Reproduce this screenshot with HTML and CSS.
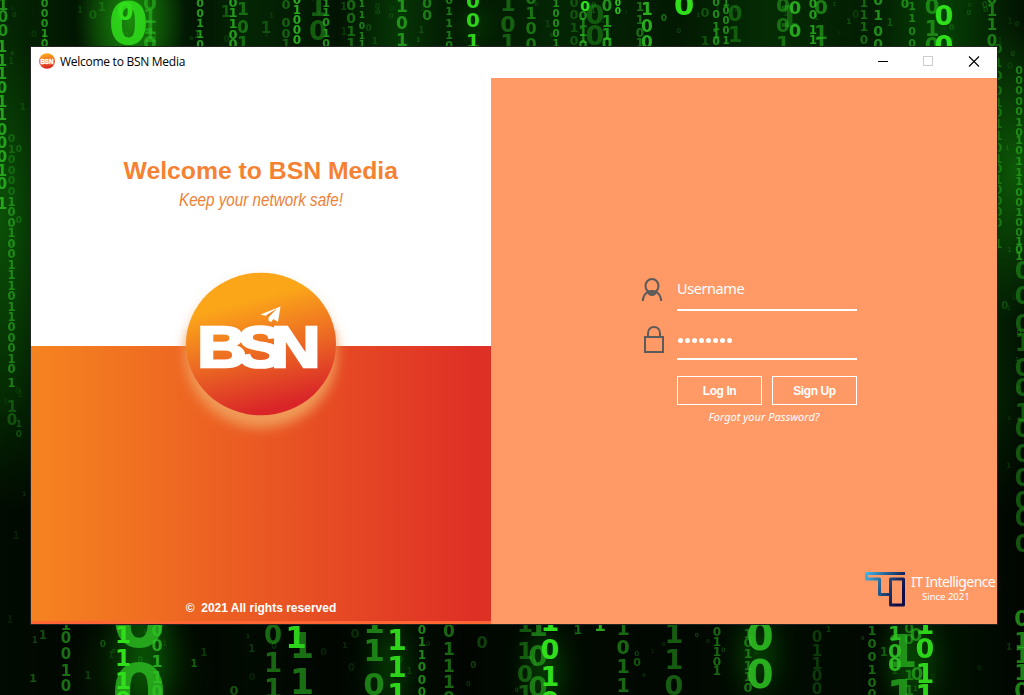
FILE: index.html
```html
<!DOCTYPE html>
<html lang="en">
<head>
<meta charset="utf-8">
<title>Welcome to BSN Media</title>
<link rel="stylesheet" href="styles.css">
</head>
<body>
<svg class="rain" id="rain" width="1024" height="695" viewBox="0 0 1024 695" aria-hidden="true"></svg>
<main class="window">
  <header class="titlebar">
    <svg class="app-icon" width="16" height="16" viewBox="0 0 16 16">
      <defs><linearGradient id="ig" x1="0" y1="0" x2=".2" y2="1"><stop offset=".15" stop-color="#fba51b"/><stop offset="1" stop-color="#dc2827"/></linearGradient></defs>
      <ellipse cx="8" cy="8" rx="8" ry="7.7" fill="url(#ig)"/>
      <text class="brand" x="1.4" y="10.5" font-size="6.8" textLength="13" lengthAdjust="spacingAndGlyphs" stroke-width=".4">BSN</text>
    </svg>
    <span class="caption">Welcome to BSN Media</span>
    <svg class="controls" width="115" height="31" viewBox="0 0 115 31" fill="none" shape-rendering="crispEdges">
      <path d="M-4 14.5H6" stroke="#000"/>
      <rect x="41.5" y="9.5" width="9" height="9" stroke="#ccc"/>
      <path d="M87 9.500l10 10M97 9.500l-10 10" stroke="#000" stroke-width="1.1" shape-rendering="auto"/>
    </svg>
  </header>
  <div class="body">
    <section class="welcome">
      <div class="intro">
        <svg class="headings" width="300" height="66" viewBox="0 0 300 66">
          <text class="headline" x="22.500" y="31" textLength="274.500" lengthAdjust="spacingAndGlyphs">Welcome to BSN Media</text>
          <text class="tagline" x="78" y="58" textLength="164" lengthAdjust="spacingAndGlyphs">Keep your network safe!</text>
        </svg>
      </div>
      <div class="brand-panel"><p class="copyright">©&nbsp; 2021 All rights reserved</p></div>
      <svg class="logo" width="210" height="200" viewBox="0 0 210 200">
        <defs>
          <linearGradient id="lg" x1=".36" y1="0" x2=".64" y2="1"><stop offset=".2" stop-color="#fba519"/><stop offset=".55" stop-color="#ec6a23"/><stop offset=".94" stop-color="#d92528"/></linearGradient>
          <filter id="soft" x="-20%" y="-20%" width="140%" height="140%"><feGaussianBlur stdDeviation="6"/></filter>
        </defs>
        <ellipse cx="105" cy="111" rx="76" ry="74" fill="#f09a57" filter="url(#soft)"/>
        <rect x="0" y="0" width="210" height="86" fill="#fff" opacity=".35"/>
        <ellipse cx="105" cy="101" rx="75" ry="71.300" fill="url(#lg)"/>
        <text class="brand" transform="scale(1.19 1)" x="34.700 68.500 96.600" y="124" font-size="57.500" stroke-width="2.600">BSN</text>
        <path d="M104.500 71.500L124.500 63.500L122 79L117.500 76L115 79L112.500 77.500L112 73.500Z" fill="#fff"/>
        <path d="M109.500 72.700L121 65.500L112.700 74.300L112.500 77.500L112 74Z" fill="#ee8120"/>
      </svg>
    </section>
    <section class="login">
      <form class="form">
        <svg class="icon user" width="22" height="24" viewBox="0 0 22 24" fill="none" stroke="#5b5b5b" stroke-width="2">
          <ellipse cx="11" cy="8" rx="6.500" ry="7"/><path d="M1.800 23C2 18.500 4 15.500 7 13.800c.5 2 2 3.300 4 3.300s3.500-1.300 4-3.300c3 1.700 5 4.700 5.200 9.200M7 13.800c2-1.200 6-1.200 8 0"/>
        </svg>
        <div class="field username">Username</div>
        <svg class="icon lock" width="22" height="28" viewBox="0 0 22 28" fill="none" stroke="#5b5b5b" stroke-width="2">
          <rect x="1" y="11" width="18" height="15"/><path d="M4 11V7.500C4 3.500 6.500 1 10 1s6 2.500 6 6.500V11"/>
        </svg>
        <div class="field password"><i></i><i></i><i></i><i></i><i></i><i></i><i></i><i></i></div>
        <div class="actions"><button type="button">Log In</button><button type="button">Sign Up</button></div>
        <a class="forgot">Forgot your Password?</a>
      </form>
      <footer class="vendor">
        <svg width="42" height="38" viewBox="0 0 42 38" fill="none" stroke="url(#vg)" stroke-width="3">
          <defs><linearGradient id="vg" gradientUnits="userSpaceOnUse" x1="1" y1="0" x2="40" y2="20"><stop offset="0" stop-color="#42c2f8"/><stop offset=".5" stop-color="#235c8c"/><stop offset="1" stop-color="#100b45"/></linearGradient></defs>
          <path d="M41 3.500H2.500V9H15.500V24.500H26.500V9H39.500V35H26.500V24.500" stroke-linejoin="round"/>
        </svg>
        <div class="vendor-text"><span class="vendor-name">IT Intelligence</span><span class="since">Since 2021</span></div>
      </footer>
    </section>
  </div>
</main>
<script src="rain.js"></script>
</body>
</html>
```
FILE: styles.css
```css
* { box-sizing: border-box; }
body { margin: 0; width: 1024px; height: 695px; overflow: hidden; padding: 47px 27px 0 31px; font-family: "Liberation Sans", sans-serif;
  background:
    linear-gradient(transparent 46px, transparent 400px, rgba(0,0,0,.72) 510px),
    radial-gradient(ellipse 55px 85px at 130px 20px, #1a8a0c, transparent),
    radial-gradient(ellipse 75px 75px at 140px 670px, #148009, transparent),
    radial-gradient(ellipse 60px 150px at 1015px 170px, #0c5706, transparent),
    radial-gradient(ellipse 60px 200px at 0 220px, #0b5007, transparent),
    linear-gradient(90deg, #042702, #021502 8%, #053404 13%, #021502 19%, #042604 24%, #021302 33%, #063605 39%, #021302 45%, #042604 54%, #031902 66%, #042c03 75%, #031d02 85%, #054004 92%, #021202); }
.rain { position: absolute; left: 0; top: 0; font-family: "DejaVu Sans", sans-serif; font-weight: bold; z-index: -1; }
.glow { fill: #10a008; filter: blur(14px); }
.window { width: 966px; height: 577px; box-shadow: 0 0 0 1px #232323; display: flex; flex-direction: column; }
.titlebar { height: 31px; background: #fff; display: flex; align-items: center; padding-left: 8px; }
.app-icon { margin-top: -3px; }
.caption { font: 12px/16px "Open Sans", sans-serif; margin: -1px 0 0 5px; color: #000; letter-spacing: -.27px; flex: 1; }
.controls { overflow: visible; }
.brand { font-family: "Liberation Sans", sans-serif; font-weight: bold; fill: #fff; stroke: #fff; }
.body { flex: 1; display: flex; }
.welcome { width: 460px; position: relative; display: flex; flex-direction: column; }
.intro { height: 268px; background: #fff; padding: 70px 0 0 70px; }
.headings { display: block; }
.headline { font-size: 24px; font-weight: bold; fill: #f58233; }
.tagline { font-size: 17.5px; font-style: italic; fill: #ee8136; }
.brand-panel { flex: 1; border-bottom: 3px solid #ff6633; background: linear-gradient(90deg, #f58220 2%, #df3026 96%); display: flex; align-items: flex-end; justify-content: center; }
.copyright { margin: 0 0 6px; font-size: 12px; line-height: 14px; font-weight: bold; color: #fff; white-space: nowrap; letter-spacing: 0; }
.logo { position: absolute; left: 125px; top: 165px; }
.login { width: 506px; background: #ff9966; display: flex; flex-direction: column; justify-content: space-between; padding-top: 198px; }
.form { width: 216px; margin-left: 150px; display: grid; grid-template-columns: 36px 180px; grid-template-rows: 35px 49px 16px 29px 24px; }
.icon.user { margin-top: 2px; }
.icon.lock { margin: 15px 0 0 3px; }
.field { border-bottom: 2px solid #fff; color: #fff; font: 14.5px/18px "Noto Sans", sans-serif; }
.username { padding-top: 3px; letter-spacing: -.42px; }
.password { display: flex; gap: 2px; padding: 27px 0 0 1px; }
.password i { width: 5px; height: 5px; border-radius: 50%; background: #fff; }
.actions { grid-column: 2; grid-row: 4; display: flex; gap: 10px; }
.actions button { flex: 1; padding: 0; border: 1px solid #fff; background: none; color: #fff; font: bold 12px "Liberation Sans", sans-serif; letter-spacing: -.4px; }
.forgot { grid-column: 2; grid-row: 5; color: #fff; font: italic 11px/14px "Noto Sans", sans-serif; text-align: center; padding: 5px 6px 0 0; }
.vendor { align-self: flex-end; display: flex; width: 133px; height: 54px; gap: 5px; }
.vendor svg { flex: none; }
.vendor-text { color: #fff; font-family: "Noto Sans", sans-serif; display: flex; flex-direction: column; white-space: nowrap; padding-top: 3px; }
.vendor-name { font-size: 14px; line-height: 18px; letter-spacing: -.6px; }
.since { font-size: 9.5px; line-height: 12px; padding-left: 11px; }
```
FILE: rain.js
```js
// Each stream: digits, centre x, [centre y of each digit], font size, opacity, optional bright flag
const streams = [
  ["100", 3, [5, 17, 31], 15, .65],
  ["111011000101", 2, [47, 61, 74, 88, 102, 115, 130, 143, 157, 171, 184, 204], 15, .75],
  ["010000", 11.5, [138, 149, 159, 170, 180, 191], 11, .3],
  ["100100111011000101", 11.5, [202, 212, 223, 233, 244, 254, 265, 275, 286, 296, 307, 317, 327, 338, 348, 359, 369, 383], 11.5, .55],
  ["10", 12, [407, 420], 15, .3], ["0010", 19, [149, 220, 424, 434], 9, .3],
  ["00010", 44.5, [3, 13, 23, 33, 43], 11, .7],
  ["0", 128.5, [23], 58, .85, 1], ["0", 125, [11], 24, 1, 1], ["01110", 150, [3, 16, 27, 35, 43], 20, .55],
  ["00110", 200, [3, 13, 23, 34, 44], 11, .75], ["0", 93, [15], 12, .25], ["1", 102, [7], 12, .25],
  ["01100", 233, [2, 12, 23, 34, 43], 13, .75], ["1", 226, [12], 15, .35], ["101", 243, [9, 27, 43], 17, .45], ["1", 266, [28], 15, .3],
  ["0001", 286, [4, 22, 33, 43], 13, .4], ["01000", 297, [0, 10, 20, 30, 40], 12, .85], ["10", 318, [6, 31], 26, .4], ["11010", 326, [3, 12, 22, 33, 43], 11, .7],
  ["0011", 351, [5, 18, 31, 43], 14, .45], ["11011", 362, [4, 15, 26, 36, 44], 9, .6],
  ["101", 402, [6, 23, 40], 17, .65], ["00", 427, [3, 15], 14, .55], ["01110", 449, [0, 11, 23, 35, 45], 11, .55],
  ["001", 473, [1, 20, 41], 20, .95, 1], ["101", 508, [3, 24, 42], 22, .4], ["0100", 531, [-2, 13, 28, 44], 16, .5],
  ["10001", 556, [3, 13, 23, 33, 43], 10, .65], ["0", 585, [6], 14, 1, 1], ["01110", 583, [15, 22, 31, 38, 44], 13, .6], ["0010", 574, [2, 14, 27, 40], 13, .3],
  ["00", 595, [14, 35], 27, .35], ["0110", 607, [6, 22, 35, 44], 15, .7], ["00", 618, [3, 11], 9, .9, 1], ["100", 647, [9, 26, 42], 17, .85], ["1101", 640, [7, 20, 33, 43], 12, .5],
  ["0", 684, [4], 29, 1, 1], ["0", 664, [18], 9, .5],
  ["01", 705, [12, 40], 13, .3], ["00110", 716, [2, 14, 26, 34, 41], 11, .65], ["10001", 726, [2, 10, 20, 30, 40], 10, .65], ["01", 735, [13, 34], 21, .35],
  ["001", 783, [5, 25, 43], 20, .45], ["00", 795, [7, 30], 18, .8], ["1", 789, [16], 30, .35], ["0011", 813, [4, 15, 30, 40], 12, .75], ["011", 821, [7, 32, 44], 20, .55],
  ["1110", 864, [3, 15, 27, 40], 12, .45], ["0100", 878, [0, 15, 31, 44], 14, .65], ["0", 905, [4], 12, .6], ["1100", 912, [6, 18, 31, 43], 11, .55],
  ["010", 932, [6, 28, 45], 21, .55], ["00", 944, [15, 45], 27, 1, 1], ["0110", 992, [-1, 11, 25, 41], 15, .55],
  ["01001011010100001", 998, [48, 62, 75, 90, 102, 112, 123, 135, 147, 158, 168, 179, 189, 200, 211, 222, 243], 13, .4],
  ["0000010101110010000", 1019, [70, 80, 90, 101, 111, 122, 132, 140, 150, 161, 172, 181, 192, 202, 212, 222, 232], 11, .55],
  ["101", 1019, [241, 249, 256], 11, .65], ["0001001000000", 1023, [270, 295, 323, 342, 367, 387, 412, 428, 453, 477, 500, 517, 543], 24, .4],
  ["1", 43, [635], 12, .35], ["10010", 66, [625, 638, 654, 671, 686], 15, .55], ["1", 33, [678], 11, .4], ["1", 88, [675], 10, .25], ["0", 103, [644], 9, .35],
  ["00", 139, [618, 693], 80, .75], ["1110", 123, [635, 658, 681, 700], 23, 1, 1], ["00110", 157, [630, 645, 661, 677, 691], 16, .75],
  ["011", 273, [635, 663, 689], 26, .5], ["1", 296, [637], 31, .95, 1], ["11", 302, [645, 681], 35, .55], ["1", 194, [663], 10, .45], ["0", 234, [690], 13, .4], ["1", 204, [652], 10, .25],
  ["110", 374, [622, 650, 684], 31, .6], ["111", 397, [640, 667, 694], 28, .95, 1], ["011000", 422, [630, 642, 655, 667, 680, 692], 12, .65], ["01110", 449, [631, 649, 666, 682, 698], 17, .5],
  ["0", 355, [633], 13, .2], ["0", 482, [642], 16, .3], ["1101", 525, [624, 651, 674, 694], 23, .4], ["100", 538, [626, 656, 687], 28, .55], ["1010", 550, [621, 649, 676, 701], 27, 1, 1],
  ["1", 578, [630], 12, .5], ["1", 600, [625], 17, .85], ["1011", 623, [628, 647, 666, 685], 19, .5], ["0", 637, [662], 11, .4], ["110", 674, [633, 659, 685], 27, .45],
  ["01101", 717, [632, 642, 652, 662, 671], 12, .5], ["101110", 748, [633, 642, 653, 665, 676, 687], 13, .5], ["00", 760, [636, 674], 39, .85], ["01100", 817, [637, 651, 664, 676, 689], 15, .25],
  ["100100", 872, [630, 643, 656, 669, 682, 693], 13, .5], ["1", 884, [652], 12, .4], ["100", 895, [633, 651, 664], 20, .9], ["11", 902, [651, 696], 45, .65], ["0011", 909, [628, 639, 675, 690], 14, .5],
  ["1011", 925, [624, 648, 673, 694], 27, .95, 1], ["0", 916, [634], 18, .6], ["0", 917, [673], 18, .6], ["01110", 1022, [618, 640, 655, 672, 690], 22, .65]
];
const NS = "http://www.w3.org/2000/svg";
const rain = document.getElementById("rain");
function digit(ch, x, y, size, opacity, fill) {
  const t = document.createElementNS(NS, "text");
  t.setAttribute("x", x);
  t.setAttribute("y", y + size * .365);
  t.setAttribute("font-size", size);
  t.setAttribute("text-anchor", "middle");
  t.setAttribute("fill", fill);
  t.setAttribute("opacity", opacity);
  t.textContent = ch;
  rain.appendChild(t);
}
// Soft glow behind the large falling columns
[[145, 650, 22, 60], [390, 665, 12, 40], [545, 670, 15, 35], [758, 655, 15, 35], [912, 660, 20, 40], [473, 25, 10, 20]].forEach(([x, y, rx, ry]) => {
  const e = document.createElementNS(NS, "ellipse");
  e.setAttribute("cx", x); e.setAttribute("cy", y); e.setAttribute("rx", rx); e.setAttribute("ry", ry);
  e.setAttribute("class", "glow"); e.setAttribute("opacity", .4);
  rain.appendChild(e);
});
// Faint distant digits, only in the strip that stays visible around the window
let seed = 17;
const rnd = () => (seed = (seed * 16807) % 2147483647) / 2147483647;
for (let i = 0; i < 1100; i++) {
  const x = 4 + rnd() * 1016, y = 4 + rnd() * 687;
  if (y > 440 && rnd() < .65) continue;
  if (x > 26 && x < 1002 && y > 42 && y < 629) continue;
  digit(rnd() < .5 ? "0" : "1", x, y, 5 + rnd() * 5, .1 + rnd() * .25, "#2fae28");
}
streams.forEach(([text, x, ys, size, opacity, bright]) =>
  ys.forEach((y, i) => digit(text[i], x, y, size, opacity, bright ? "#30de1c" : "#2fc424")));
```
